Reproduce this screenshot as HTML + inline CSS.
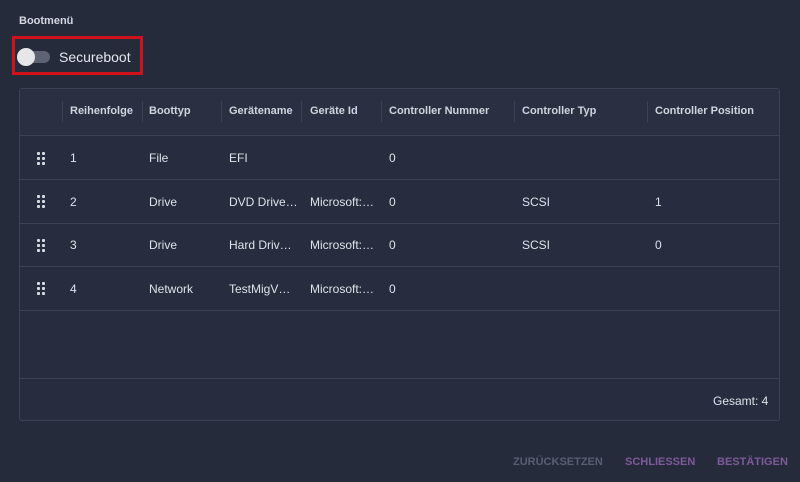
<!DOCTYPE html><html><head><style>
body{margin:0;width:800px;height:482px;background:#262b3b;font-family:"Liberation Sans",sans-serif;color:#dfe2ea;position:relative;overflow:hidden}
.a{position:absolute}
.t{font-size:12px;white-space:nowrap}
.h{font-weight:bold;font-size:11px;color:#d0d4de;white-space:nowrap}
.line{position:absolute;left:20px;width:760px;height:1px;background:#3b4254}
.sep{position:absolute;top:101px;width:1px;height:21px;background:#3b4254}
.dots{position:absolute;width:8px;height:12px}
.dots i{position:absolute;width:3px;height:3px;background:#d8dce4;border-radius:1px}
.b{font-size:11px;font-weight:bold;white-space:nowrap}
</style></head><body>
<div class="a t" style="left:19px;top:15px;font-size:11px;font-weight:bold;color:#d6d9e2">Bootmenü</div>
<div class="a" style="left:12px;top:36px;width:131px;height:39px;border:3px solid #d0121b;box-sizing:border-box"></div>
<div class="a" style="left:20px;top:51px;width:30px;height:12px;border-radius:6px;background:#5d6372"></div>
<div class="a" style="left:17px;top:48px;width:18px;height:18px;border-radius:50%;background:#e6e6e8"></div>
<div class="a" style="left:59px;top:49px;font-size:14px;color:#e4e6ec">Secureboot</div>
<div class="a" style="left:19px;top:88px;width:761px;height:333px;border:1px solid #3b4254;border-radius:3px;box-sizing:border-box;background:#272d3e"></div>
<div class="a" style="left:20px;top:89px;width:759px;height:46px;background:#2a3041"></div>
<div class="sep" style="left:62px"></div><div class="sep" style="left:142px"></div><div class="sep" style="left:221px"></div><div class="sep" style="left:301px"></div><div class="sep" style="left:381px"></div><div class="sep" style="left:514px"></div><div class="sep" style="left:647px"></div>
<div class="a h" style="left:70px;top:105px">Reihenfolge</div>
<div class="a h" style="left:149px;top:105px">Boottyp</div>
<div class="a h" style="left:229px;top:105px">Gerätename</div>
<div class="a h" style="left:310px;top:105px">Geräte Id</div>
<div class="a h" style="left:389px;top:105px">Controller Nummer</div>
<div class="a h" style="left:522px;top:105px">Controller Typ</div>
<div class="a h" style="left:655px;top:105px">Controller Position</div>
<div class="line" style="top:135px"></div><div class="line" style="top:179px"></div><div class="line" style="top:223px"></div><div class="line" style="top:266px"></div><div class="line" style="top:310px"></div><div class="line" style="top:378px"></div>

<div class="dots" style="left:37px;top:152px"><i style="left:0;top:0"></i><i style="left:5px;top:0"></i><i style="left:0;top:5px"></i><i style="left:5px;top:5px"></i><i style="left:0;top:10px"></i><i style="left:5px;top:10px"></i></div>
<div class="dots" style="left:37px;top:195px"><i style="left:0;top:0"></i><i style="left:5px;top:0"></i><i style="left:0;top:5px"></i><i style="left:5px;top:5px"></i><i style="left:0;top:10px"></i><i style="left:5px;top:10px"></i></div>
<div class="dots" style="left:37px;top:239px"><i style="left:0;top:0"></i><i style="left:5px;top:0"></i><i style="left:0;top:5px"></i><i style="left:5px;top:5px"></i><i style="left:0;top:10px"></i><i style="left:5px;top:10px"></i></div>
<div class="dots" style="left:37px;top:282px"><i style="left:0;top:0"></i><i style="left:5px;top:0"></i><i style="left:0;top:5px"></i><i style="left:5px;top:5px"></i><i style="left:0;top:10px"></i><i style="left:5px;top:10px"></i></div>

<div class="a t" style="left:70px;top:151px">1</div><div class="a t" style="left:149px;top:151px">File</div><div class="a t" style="left:229px;top:151px">EFI</div><div class="a t" style="left:389px;top:151px">0</div>
<div class="a t" style="left:70px;top:195px">2</div><div class="a t" style="left:149px;top:195px">Drive</div><div class="a t" style="left:229px;top:195px">DVD Drive…</div><div class="a t" style="left:310px;top:195px">Microsoft:…</div><div class="a t" style="left:389px;top:195px">0</div><div class="a t" style="left:522px;top:195px">SCSI</div><div class="a t" style="left:655px;top:195px">1</div>
<div class="a t" style="left:70px;top:238px">3</div><div class="a t" style="left:149px;top:238px">Drive</div><div class="a t" style="left:229px;top:238px">Hard Driv…</div><div class="a t" style="left:310px;top:238px">Microsoft:…</div><div class="a t" style="left:389px;top:238px">0</div><div class="a t" style="left:522px;top:238px">SCSI</div><div class="a t" style="left:655px;top:238px">0</div>
<div class="a t" style="left:70px;top:282px">4</div><div class="a t" style="left:149px;top:282px">Network</div><div class="a t" style="left:229px;top:282px">TestMigV…</div><div class="a t" style="left:310px;top:282px">Microsoft:…</div><div class="a t" style="left:389px;top:282px">0</div>
<div class="a t" style="left:713px;top:394px">Gesamt: 4</div>
<div class="a b" style="left:513px;top:456px;color:#595f73">ZURÜCKSETZEN</div>
<div class="a b" style="left:625px;top:456px;color:#7d5a9a">SCHLIESSEN</div>
<div class="a b" style="left:717px;top:456px;color:#7d5a9a">BESTÄTIGEN</div>
</body></html>
